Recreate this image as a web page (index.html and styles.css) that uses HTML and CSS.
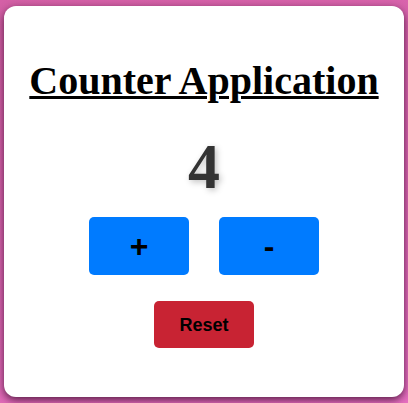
FILE: index.html
```html
<!DOCTYPE html>
<html lang="en">
<head>
<meta charset="utf-8">
<title>Counter Application</title>
<link rel="stylesheet" href="styles.css">
</head>
<body>
  <div class="card">
    <h1 class="title">Counter Application</h1>
    <div class="count">4</div>
    <div class="controls">
      <button class="btn btn-blue">+</button>
      <button class="btn btn-blue">-</button>
    </div>
    <div class="reset-row">
      <button class="btn btn-red">Reset</button>
    </div>
  </div>
</body>
</html>
```

FILE: styles.css
```css
html, body {
  margin: 0;
  padding: 0;
  height: 100%;
}
body {
  background: linear-gradient(160deg, #d460a6 0%, #de68b4 60%, #e870c2 100%);
  display: flex;
  align-items: center;
  justify-content: center;
}
.card {
  box-sizing: border-box;
  width: 400px;
  background: #fff;
  border-radius: 12px;
  padding: 20px 20px 49px;
  box-shadow: 0 3px 8px rgba(40, 0, 30, 0.75);
  text-align: center;
}
.title {
  font-family: "Liberation Serif", "Times New Roman", serif;
  font-weight: bold;
  font-size: 40px;
  line-height: 44px;
  margin: 33px 0 0;
  color: #000;
  text-decoration: underline;
  text-decoration-thickness: 3px;
}
.count {
  font-family: "Liberation Serif", "Times New Roman", serif;
  font-weight: bold;
  font-size: 64px;
  line-height: 70px;
  margin-top: 29px;
  color: #333;
  text-shadow: 2px 2px 6px rgba(0, 0, 0, 0.25);
}
.controls {
  display: flex;
  justify-content: center;
  gap: 30px;
  margin-top: 15px;
}
.btn {
  font-family: "Liberation Sans", Arial, sans-serif;
  font-weight: bold;
  color: #000;
  border: none;
  border-radius: 5px;
  width: 100px;
  cursor: pointer;
  padding: 0;
  line-height: 1;
}
.btn-blue {
  background: #007bff;
  font-size: 32px;
  height: 58px;
}
.btn-red {
  background: #c82333;
  font-size: 18px;
  height: 47px;
}
.reset-row {
  display: flex;
  justify-content: center;
  margin-top: 26px;
}
```
